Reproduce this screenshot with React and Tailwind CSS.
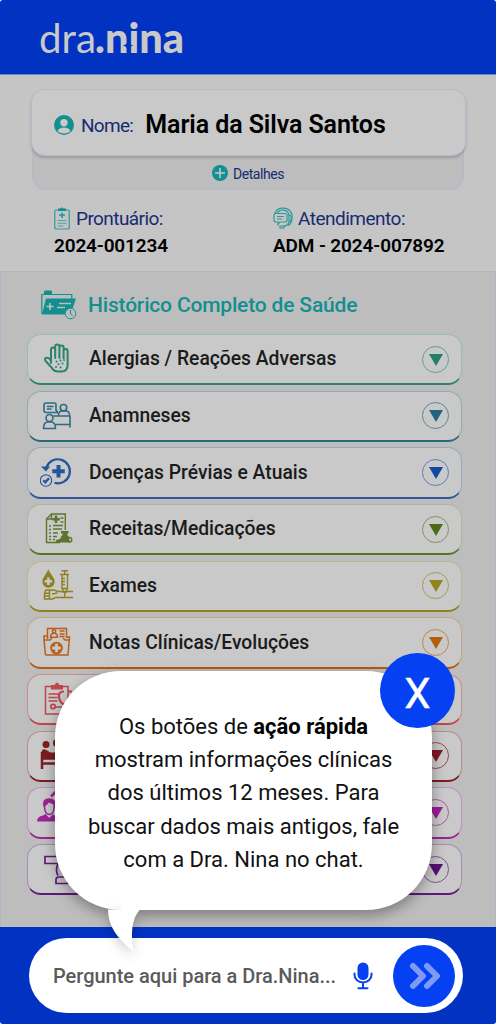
import { useState } from 'react'

// Row icons, all drawn on a 36x36 box
const AllergyIcon = () => (
  <svg viewBox="0 0 36 36" className="w-9 h-9" fill="none" stroke="currentColor" strokeWidth="2" strokeLinecap="round" strokeLinejoin="round">
    <path d="M11 22V8.500a2 2 0 0 1 4.200 0V17M15.200 17V5.500a2 2 0 0 1 4.200 0V17M19.400 17V6.500a2 2 0 0 1 4.200 0V17M23.600 17V10a2 2 0 0 1 4 0v14q0 6.500-6.500 6.500h-3q-4.500 0-6.500-4l-6-6.500q-1.500-2 .5-3t4 1.500l.9 1.500" />
    <path d="M16.500 20.500h.1M20.500 19.500h.1M18.500 23.200h.1M22.500 22.500h.1M16 26h.1M20.500 26.500h.1M24 19h.1" strokeWidth="1.900" />
  </svg>
)

const AnamneseIcon = () => (
  <svg viewBox="0 0 36 36" className="w-9 h-9" fill="none" stroke="currentColor" strokeWidth="1.600" strokeLinecap="round" strokeLinejoin="round">
    <path d="M6 5h8.500q1.500 0 1.500 1.500V12l1.500 2.500H6q-2 0-2-2V7q0-2 2-2zM7.500 8.500h5.500M7.500 11h3.500" />
    <circle cx="23.500" cy="9.700" r="3.200" />
    <path d="M18.500 17q0-4 3.500-4h3.500q4 0 4 4" />
    <path d="M13.500 18H30v11M30 26.500H16" />
    <circle cx="9.500" cy="20" r="3.500" />
    <path d="M3.500 30.500q0-6.500 4.500-6.500h3q4.500 0 4.500 6.500z" />
  </svg>
)

const DiseaseIcon = () => (
  <svg viewBox="0 0 36 36" className="w-9 h-9" fill="none" stroke="currentColor" strokeWidth="2.200">
    <path d="M6.500 13.500a12 12 0 1 1 8 15.300" />
    <path d="M1 12.500h9l-4 5z" fill="currentColor" stroke="none" />
    <path d="M18.500 11v12.500M12.300 17.200h12.500" strokeWidth="4" />
    <circle cx="6" cy="26.500" r="5.700" strokeWidth="1.100" />
    <path d="M3.300 26.300l2 2 3.700-4" />
  </svg>
)

const RecipeIcon = () => (
  <svg viewBox="0 0 36 36" className="w-9 h-9" fill="none" stroke="currentColor" strokeWidth="1.400">
    <path d="M20 31.500H6.500V8l5-5H25.300v16" />
    <path d="M11.500 3v5h-5" strokeWidth="1.400" />
    <path d="M16 4.500v7.500M12.200 8.200h7.600" strokeWidth="2.600" />
    <path d="M20.500 7h3M20.500 11h3M9 15h2M13 14.500h10M9 18.500h2M13 18h9M9 22h2M13 22h5M9 25.500h2M13 25.500h4M9 28.500h2M13 28.500h2" />
    <path d="M21 20h7.500v2.500h-1.200v1.500q3 2 2.200 7.500H16q-1-3 2-3l2.500-1q0-2.500 2-3.500v-1.500H21z" fill="currentColor" stroke="none" />
    <circle cx="29.500" cy="28.700" r="2.300" />
  </svg>
)

const ExamIcon = () => (
  <svg viewBox="0 0 36 36" className="w-9 h-9" fill="none" stroke="currentColor" strokeWidth="1.400">
    <path d="M8.300 3C6.800 7 3 9.500 3 13.500a5.500 5.500 0 0 0 11 0C14 9.500 9.800 7 8.300 3z" fill="currentColor" />
    <path d="M8.400 9.500v7.500M4.700 13.200h7.400" stroke="#c9c9c9" strokeWidth="2.600" />
    <path d="M21.500 2.700h6.500M24.700 3v3.500M22 6.500h5.500v14H22zM20 6.500h9M24.700 24v6M22 10.500h3M22 13.500h3M22 16.500h3M23 20.500v3.500h3.500v-3.500" />
    <path d="M33 23.500H18l-4-1.500H6q-2 2-1.500 9h8l3-1.500H33M4.500 25.200h5M4.500 28h5M9.500 22.500v8M12 26l5.500-1" />
  </svg>
)

const NotesIcon = () => (
  <svg viewBox="0 0 36 36" className="w-9 h-9" fill="none" stroke="currentColor" strokeWidth="1.500">
    <path d="M7.500 15V4.500h19V14M10.500 13.200q0-4 3.500-4t3.500 4z" />
    <circle cx="14" cy="7.500" r="1.700" />
    <path d="M19.500 7h5M19.500 10h5M19.500 12.500h5" />
    <path d="M5.500 31L4 16h6l2-2M29.500 16H25l-2-2M5.500 31H28L29.500 13h-3M4 16v-4h3.500" />
    <circle cx="16.500" cy="24" r="6.300" fill="currentColor" stroke="none" />
    <path d="M16.500 19.700v8.600M12.200 24h8.600" stroke="#c9c9c9" strokeWidth="2.800" />
  </svg>
)

const ClipboardIcon = () => (
  <svg viewBox="0 0 36 36" className="w-9 h-9" fill="none" stroke="currentColor" strokeWidth="1.500">
    <path d="M11 5.500H5.500V33H28V5.500h-5" />
    <path d="M11 4h3.500q2.500-5 5 0H23v4.500H11z" fill="currentColor" stroke="none" />
    <path d="M8.500 13h10M8.500 16.500h9M8.500 20h9M15 26h7" />
    <circle cx="13" cy="25.500" r="2.200" strokeWidth="1.800" />
    <path d="M24 10.500q-6 0-5 6t7 8M28 10.500h4" strokeWidth="2.200" />
  </svg>
)

const BedIcon = () => (
  <svg viewBox="0 0 36 36" className="w-9 h-9" fill="none" stroke="currentColor" strokeWidth="2.500">
    <circle cx="6" cy="6.500" r="3.500" fill="currentColor" stroke="none" />
    <path d="M1.500 20v-5q0-4.500 4-3.500l5 3h5v5.500z" fill="currentColor" stroke="none" />
    <path d="M1 20.500h29M2 14v17M1 25.500h29M27 21v10" />
    <circle cx="17" cy="5" r="4" fill="currentColor" stroke="none" />
  </svg>
)

const PersonIcon = () => (
  <svg viewBox="0 0 36 36" className="w-9 h-9 overflow-visible" fill="none" stroke="currentColor" strokeWidth="1.400">
    <path d="M4 12q-1.500-7 5-7 7 0 5.500 7l-1-2.500q-3-.5-5-2-1 2.500-3.500 4z" fill="currentColor" />
    <path d="M4.500 12q0 8.500 4.800 8.500t4.800-8.500" />
    <path d="M-3 27.500q0-5 6-6l2.500-1.500 3.800 4 3.700-4 1.500 1.500q7 1 7 6z" fill="currentColor" stroke="none" />
    <path d="M11 2.500l5-5" strokeWidth="2.500" />
  </svg>
)

const MicroscopeIcon = () => (
  <svg viewBox="0 0 36 36" className="w-9 h-9" fill="none" stroke="currentColor" strokeWidth="1.700">
    <path d="M5 5.500h18v7H5zM18 12.500q-3 7 0 12M16 32.500v-4q0-2.500 3-2.500h9v6.500z" />
  </svg>
)

const sections = [
  { id: 'allergies', title: 'Alergias / Reações Adversas', Icon: AllergyIcon, row: 'border-[#9cbbb2] border-b-[#2f8270]', icon: 'text-[#2b826b]', ring: 'border-[#5f9e8e]', arrow: 'text-[#247f68]' },
  { id: 'anamneses', title: 'Anamneses', Icon: AnamneseIcon, row: 'border-[#91abb3] border-b-[#2a687f]', icon: 'text-[#2e6a84]', ring: 'border-[#5b8594]', arrow: 'text-[#20647a]' },
  { id: 'diseases', title: 'Doenças Prévias e Atuais', Icon: DiseaseIcon, row: 'border-[#9aa9bd] border-b-[#2c579c]', icon: 'text-[#25549b]', ring: 'border-[#5b7db7]', arrow: 'text-[#1248a0]' },
  { id: 'recipes', title: 'Receitas/Medicações', Icon: RecipeIcon, row: 'border-[#aeb69a] border-b-[#577723]', icon: 'text-[#5c762c]', ring: 'border-[#7f9458]', arrow: 'text-[#4d6b16]' },
  { id: 'exams', title: 'Exames', Icon: ExamIcon, row: 'border-[#bbb792] border-b-[#8e821c]', icon: 'text-[#8e8021]', ring: 'border-[#a59b56]', arrow: 'text-[#93831a]' },
  { id: 'notes', title: 'Notas Clínicas/Evoluções', Icon: NotesIcon, row: 'border-[#c5a583] border-b-[#b65b0d]', icon: 'text-[#b95e18]', ring: 'border-[#bd854a]', arrow: 'text-[#b45f05]' },
  { id: 'clipboard', Icon: ClipboardIcon, row: 'border-[#c58e8e] border-b-[#c44548]', icon: 'text-[#bd4649]', ring: 'border-[#c17274]', arrow: 'text-[#bd4649]' },
  { id: 'bed', Icon: BedIcon, row: 'border-[#b38d8f] border-b-[#7d1c20]', icon: 'text-[#7c1c20]', ring: 'border-[#98484c]', arrow: 'text-[#80191f]' },
  { id: 'person', Icon: PersonIcon, row: 'border-[#c18fc0] border-b-[#9c2396]', icon: 'text-[#9c2396]', ring: 'border-[#ab57a8]', arrow: 'text-[#9c1d95]' },
  { id: 'microscope', Icon: MicroscopeIcon, row: 'border-[#a78eb1] border-b-[#60187b]', icon: 'text-[#60187b]', ring: 'border-[#81529a]', arrow: 'text-[#550f70]' },
]

function Logo() {
  return (
    <svg width="148" height="40" viewBox="0 0 148 40" className="overflow-visible" fill="#c9c9c9">
      <text x="0" y="35" fontFamily="Lato" fontSize="41" fontWeight="400" textLength="57" lengthAdjust="spacingAndGlyphs">dra</text>
      <text x="56" y="35" fontFamily="Lato" fontSize="41" fontWeight="900" textLength="89" lengthAdjust="spacingAndGlyphs">.nina</text>
      <path d="M89 22q1 5 5.500 5.500-4.500.5-5.500 5.500-1-5-5.500-5.500 4.500-.5 5.500-5.500z" fill="#0232c2" />
    </svg>
  )
}

function SectionRow({ section }) {
  const { title, Icon, row, icon, ring, arrow } = section
  return (
    <button className={`flex items-center w-full h-[51.300px] pl-3 pr-3 rounded-[14px] border border-b-2 bg-[#c9c9c9] text-left ${row}`}>
      <span className={`w-9 shrink-0 ${icon}`}><Icon /></span>
      <span className="flex-1 ml-[13px] pt-[1.500px] text-[19.300px] font-medium text-[#1b1b1b] whitespace-nowrap">{title}</span>
      <span className={`flex items-center justify-center w-[27px] h-[27px] rounded-full border ${ring}`}>
        <svg viewBox="0 0 14 12" className={`w-3.5 h-3 mt-px ${arrow}`} fill="currentColor"><path d="M0 0h14L7 12z" /></svg>
      </span>
    </button>
  )
}

function QuickTip({ onClose }) {
  return (
    <div className="absolute left-[55px] top-[671px] w-[377px] h-[239px]">
      <div className="absolute inset-0 rounded-[66px] bg-white shadow-[0_5px_14px_rgba(0,0,0,0.35)]"></div>
      <svg className="absolute left-[50px] top-[236px] w-10 h-12 overflow-visible drop-shadow-[0_4px_6px_rgba(0,0,0,0.2)]" viewBox="0 0 40 48" fill="white">
        <path d="M3 2.500c0 16 9 29 25.500 42-3-18-2-33 6.500-42z" />
      </svg>
      <div className="absolute left-[66px] right-[66px] bottom-0 h-5 bg-white"></div>
      <p className="relative pt-[39px] text-center text-[22px] leading-[33.200px] text-[#111] whitespace-nowrap">
        Os botões de <b className="font-bold text-black">ação rápida</b><br />
        mostram informações clínicas<br />
        dos últimos 12 meses. Para<br />
        buscar dados mais antigos, fale<br />
        com a Dra. Nina no chat.
      </p>
      <button onClick={onClose} className="absolute left-[325px] -top-[18px] flex items-center justify-center w-[75px] h-[75px] rounded-full bg-[#0540f2] text-white text-[42px] leading-none pt-1.5 [-webkit-text-stroke:0.400px_white]">
        X
      </button>
    </div>
  )
}

export default function App() {
  const [showTip, setShowTip] = useState(true)

  return (
    <div className="relative flex flex-col w-[496px] h-[1024px] overflow-hidden rounded-[3px] bg-[#c5c5c5] font-['Roboto',sans-serif]">
      {/* Header */}
      <header className="h-[75px] shrink-0 bg-[#0232c2] border-b border-[#6d83c9] pl-[39px] pt-[18px]">
        <Logo />
      </header>

      {/* Patient */}
      <section className="h-[196px] shrink-0 pt-3.5 px-[31px]">
        <div className="w-[435px] h-[67px] relative z-10 flex items-center pl-[22px] pt-1 rounded-[14px] border border-[#b7bbce] bg-[#c9c9c9] shadow-[0_2px_3px_rgba(0,0,0,0.18)]">
          <svg viewBox="0 0 20 20" className="w-5 h-5" fill="#118f91">
            <circle cx="10" cy="10" r="10" />
            <circle cx="10" cy="7.800" r="3.700" fill="#c9c9c9" />
            <path d="M3.500 16q1.500-3.500 6.500-3.500t6.500 3.500q-2.500 2.500-6.500 2.500T3.500 16z" fill="#c9c9c9" />
          </svg>
          <span className="ml-[7px] mt-1 text-[19px] tracking-[-0.700px] text-[#172b72]">Nome:</span>
          <span className="ml-3 mt-px text-[25px] tracking-[-0.080px] font-semibold text-black whitespace-nowrap">Maria da Silva Santos</span>
        </div>
        <div className="flex items-center justify-center w-[432px] h-12 -mt-3.5 ml-px pt-[15px] rounded-b-[14px] border border-t-0 border-[#b4b8c9] bg-[#bdbdbd]">
          <svg viewBox="0 0 16 16" className="w-4 h-4" fill="#118f91">
            <circle cx="8" cy="8" r="8" />
            <path d="M8 3v10M3 8h10" stroke="#c9c9c9" strokeWidth="1.500" />
          </svg>
          <span className="ml-[5px] mt-0.5 text-[14px] tracking-[-0.450px] text-[#172b72]">Detalhes</span>
        </div>

        <div className="flex pl-[23px] pt-[13px] text-[19px] leading-7">
          <div className="w-[219px]">
            <div className="flex items-center text-[#172b72]">
              <svg viewBox="0 0 16 23" className="w-4 h-[23px]" fill="none" stroke="#2e999c" strokeWidth="1.200">
                <rect x=".8" y="3" width="14.400" height="19" rx="1" />
                <path d="M4 1.500h2.500q1.500-2 3 0H12V4H4z" fill="#118f91" stroke="none" />
                <path d="M8 5.500v5.500M5.200 8.200h5.600" strokeWidth="1.700" />
                <path d="M3.500 13.500h9M3.500 16.200h9M3.500 19h6" strokeWidth=".8" />
              </svg>
              <span className="ml-1.5 mt-0.5 tracking-[-0.580px]">Prontuário:</span>
            </div>
            <div className="text-[19px] tracking-[-0.150px] leading-[26px] font-semibold text-black">2024-001234</div>
          </div>
          <div>
            <div className="flex items-center text-[#172b72]">
              <svg viewBox="0 0 20 22" className="w-5 h-[22px]" fill="none" stroke="#2e999c" strokeWidth="1.200">
                <path d="M2 6.500C4-1 17-1 19 8c.5 5-1 9-4 10.500M4.500 6C7 1.500 15 2 16 8v7c-1 3-3 4-5 4" />
                <path d="M2.500 6.500H12q2 0 2 2V13q0 2-2 2H7l-2 2.500V15H3q-2 0-2-2V8.500q0-2 1.500-2zM4 9.500h7M4 12h5M7 19h4v2H7zM16 8l2 1v5l-2 1" />
              </svg>
              <span className="ml-[5px] mt-0.5 tracking-[-0.500px]">Atendimento:</span>
            </div>
            <div className="text-[19px] tracking-[-0.120px] leading-[26px] font-semibold text-black whitespace-nowrap">ADM - 2024-007892</div>
          </div>
        </div>
      </section>

      {/* History */}
      <main className="h-[656px] shrink-0 border border-b-0 border-[#b0b5c7] bg-[#bdbdbd] px-[26px]">
        <div className="flex items-center h-[62px] pl-3.5 pt-1">
          <svg viewBox="0 0 36 30" className="w-9 h-[30px]" fill="#118f91">
            <path d="M.8 24V4.500h30V9" fill="none" stroke="#118f91" strokeWidth="1.200" />
            <path d="M3 4V2q0-1.500 1-1.500h6q1 0 1 1.500v2zM5 8.500h30L31 20q-6-2-7 4.500H1z" />
            <path d="M9 13v7M5.500 16.500h7M18 13.500h12M16 17.500h8" stroke="#bdbdbd" strokeWidth="1.700" />
            <circle cx="29.500" cy="23.500" r="5.300" fill="#bdbdbd" stroke="#118f91" />
            <path d="M29.500 20v4l2 1.500" fill="none" stroke="#118f91" />
          </svg>
          <h1 className="ml-[11px] mt-0.5 text-[21px] tracking-[-0.170px] font-medium text-[#118f91] whitespace-nowrap">Histórico Completo de Saúde</h1>
        </div>
        <div className="flex flex-col gap-[5.360px] w-[435px]">
          {sections.map((section) => (
            <SectionRow key={section.id} section={section} />
          ))}
        </div>
      </main>

      {/* Chat bar */}
      <footer className="h-[97px] shrink-0 bg-[#0232c2] pt-[11px] pl-[29px]">
        <div className="flex items-center w-[434px] h-[75px] rounded-full bg-white pl-6 pr-2">
          <span className="w-[300px] text-[20px] font-medium tracking-[-0.020px] text-[#5a5a5a] whitespace-nowrap">Pergunte aqui para a Dra.Nina...</span>
          <svg viewBox="0 0 20 28" className="w-5 h-7" fill="#0540f2">
            <rect x="4.500" y="0.500" width="11" height="17.500" rx="5.500" />
            <path d="M1.500 11.500v1.500a8.500 7.500 0 0 0 17 0v-1.500M10 21v5M5.500 26.200h9" fill="none" stroke="#0540f2" strokeWidth="2" strokeLinecap="round" />
          </svg>
          <button className="flex items-center justify-center ml-auto w-[62px] h-[62px] rounded-full bg-[#0540f2]">
            <svg viewBox="0 0 32 28" className="w-8 h-7 ml-0.5" fill="none" stroke="#8099f5" strokeWidth="6" strokeLinecap="round" strokeLinejoin="round">
              <path d="M4 4l10 10L4 24M18 4l10 10-10 10" />
            </svg>
          </button>
        </div>
      </footer>

      {showTip && <QuickTip onClose={() => setShowTip(false)} />}
    </div>
  )
}
